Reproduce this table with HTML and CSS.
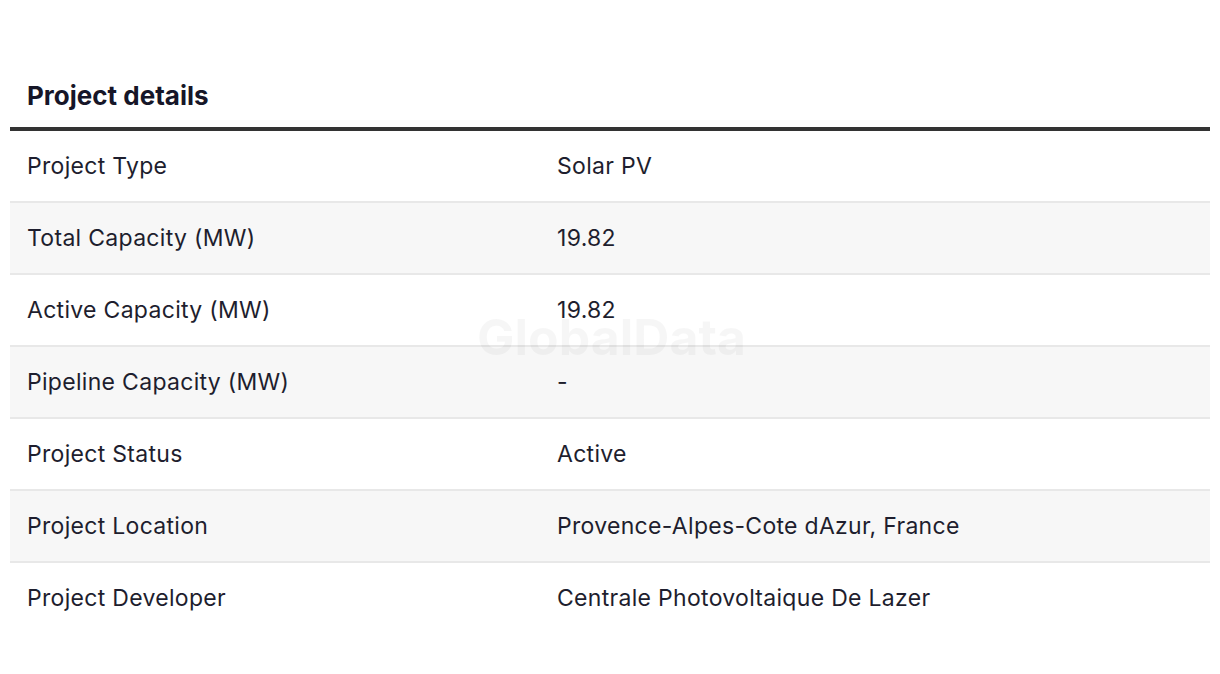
FILE: index.html
```html
<!DOCTYPE html>
<html lang="en">
<head>
<meta charset="utf-8">
<title>Project details</title>
<link rel="stylesheet" href="styles.css">
</head>
<body>
<section class="panel">
  <h2 class="panel-title">Project details</h2>
  <div class="table">
    <div class="row"><div class="cell">Project Type</div><div class="cell">Solar PV</div></div>
    <div class="row alt"><div class="cell">Total Capacity (MW)</div><div class="cell">19.82</div></div>
    <div class="row"><div class="cell">Active Capacity (MW)</div><div class="cell">19.82</div></div>
    <div class="row alt"><div class="cell">Pipeline Capacity (MW)</div><div class="cell">-</div></div>
    <div class="row"><div class="cell">Project Status</div><div class="cell">Active</div></div>
    <div class="row alt"><div class="cell">Project Location</div><div class="cell">Provence-Alpes-Cote dAzur, France</div></div>
    <div class="row last"><div class="cell">Project Developer</div><div class="cell">Centrale Photovoltaique De Lazer</div></div>
    <div class="watermark">GlobalData</div>
  </div>
</section>
</body>
</html>
```

FILE: styles.css
```css
html, body {
  margin: 0;
  padding: 0;
  background: #ffffff;
}
body {
  font-family: Inter, "Noto Sans", "Liberation Sans", sans-serif;
  color: #1b1b2b;
}
.panel {
  padding: 76px 10px 0 10px;
}
.panel-title {
  margin: 0;
  padding: 0 0 11px 17px;
  font-size: 26px;
  line-height: 40px;
  font-weight: 700;
  color: #161628;
  border-bottom: 4px solid #333333;
}
.table {
  position: relative;
}
.row {
  display: grid;
  grid-template-columns: 530px 1fr;
  height: 70px;
  align-items: center;
  border-bottom: 2px solid #e8e8e8;
  background: #ffffff;
}
.row.last {
  border-bottom: none;
}
.row.alt {
  background: #f7f7f7;
}
.cell {
  padding-left: 17px;
  font-size: 23px;
  line-height: 30px;
  font-weight: 400;
  letter-spacing: 0.3px;
  color: #1e1e2e;
}
.watermark {
  position: absolute;
  left: 467px;
  top: 176px;
  font-size: 50px;
  font-weight: 700;
  color: rgba(0, 0, 0, 0.035);
  pointer-events: none;
}
```
